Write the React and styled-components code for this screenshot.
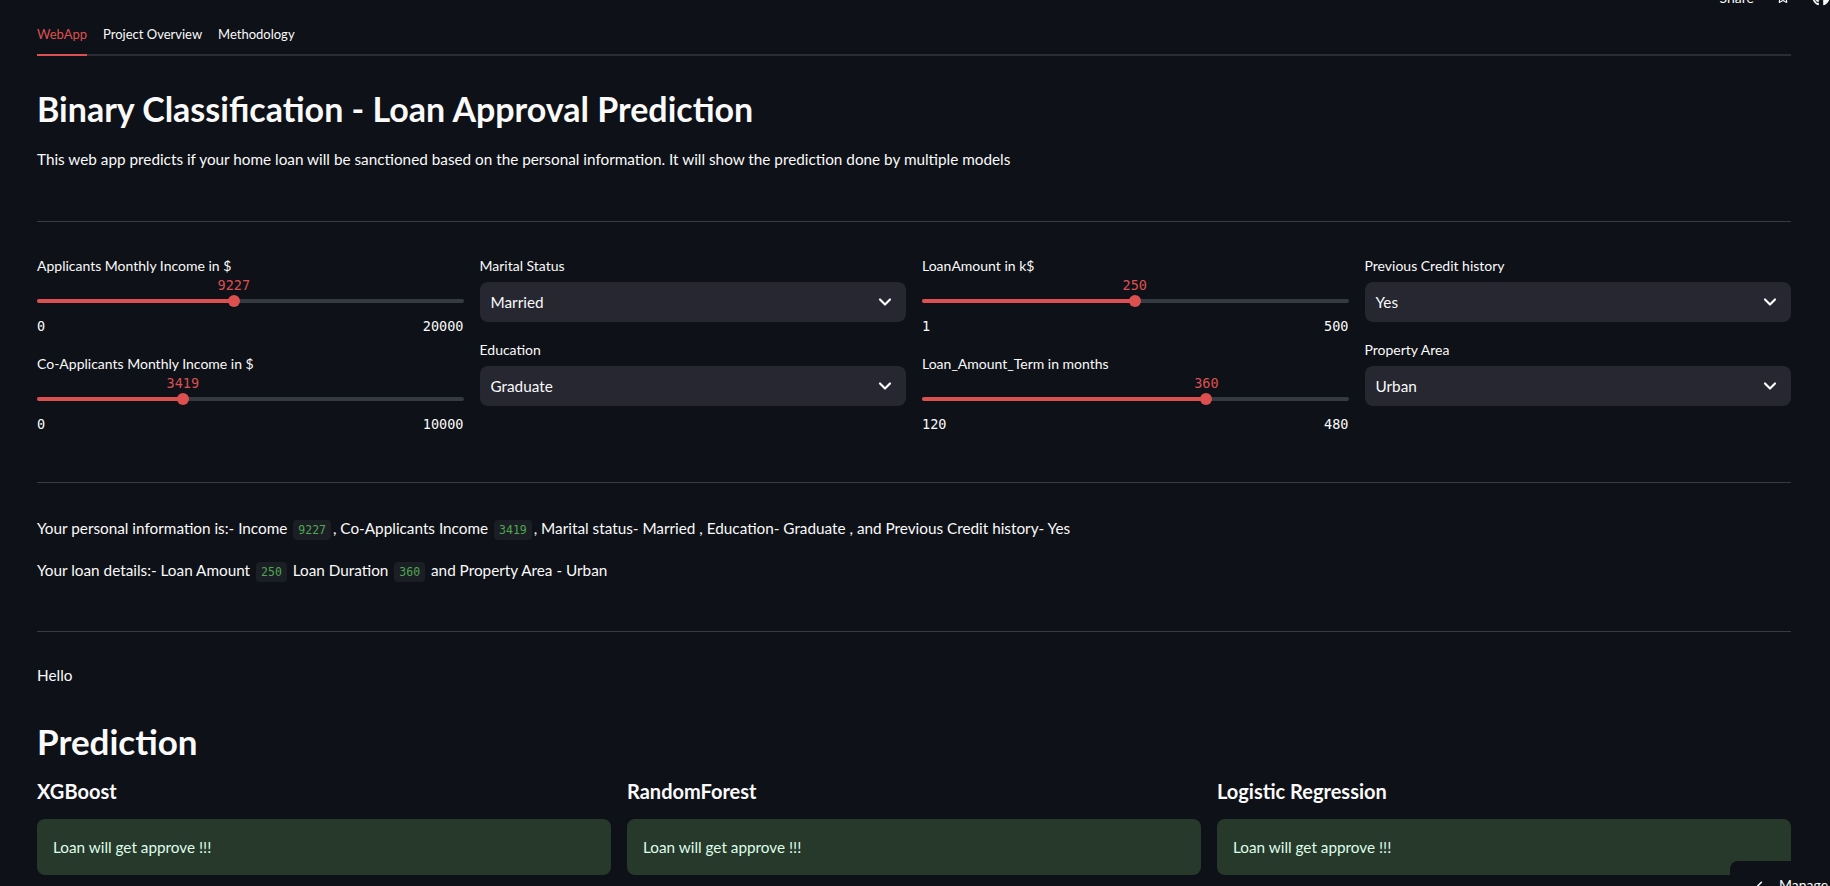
import React from 'react';
import styled, { createGlobalStyle } from 'styled-components';
import { Star, ChevronLeft } from 'lucide-react';
import { FaGithub } from 'react-icons/fa';

const RED = '#dd5050';
const TEXT = '#fafafa';
const SANS = `Lato, "Noto Sans", sans-serif`;
const MONO = `"DejaVu Sans Mono", "Liberation Mono", monospace`;

const GlobalStyle = createGlobalStyle`
  html, body {
    margin: 0;
    padding: 0;
    height: 886px;
    overflow: hidden;
    background: #0e1117;
    color: ${TEXT};
    font-family: ${SANS};
  }
`;

const Page = styled.div`
  position: relative;
  height: 886px;
  padding: 0 39px 0 37px;
  box-sizing: border-box;
  overflow: hidden;
`;

const TopBar = styled.div`
  position: absolute;
  top: -12px;
  right: 0;
  display: flex;
  align-items: center;
  gap: 22px;
  font-size: 14px;
  color: ${TEXT};
  svg {
    display: block;
  }
`;

const TabList = styled.div`
  display: flex;
  gap: 16px;
  margin-top: 14px;
  border-bottom: 2px solid #2b2c34;
`;

const Tab = styled.div`
  height: 40px;
  margin-bottom: -2px;
  border-bottom: 2px solid ${(p) => (p.$active ? RED : 'transparent')};
  display: flex;
  align-items: center;
  font-size: 13px;
  color: ${(p) => (p.$active ? RED : TEXT)};
`;

const Title = styled.h1`
  margin: 33px 0 0;
  font-size: 34px;
  line-height: 1.2;
  font-weight: 700;
`;

const Text = styled.p`
  margin: ${(p) => p.$mt || 0}px 0 0;
  font-size: 15.3px;
  line-height: 24px;
`;

const Rule = styled.hr`
  margin: ${(p) => p.$mt}px 0 0;
  border: none;
  height: 1px;
  background: #393b42;
`;

const WidgetGrid = styled.div`
  display: grid;
  grid-template-columns: repeat(4, 1fr);
  gap: 16px;
  margin-top: 34px;
`;

const Column = styled.div`
  display: flex;
  flex-direction: column;
  gap: ${(p) => p.$gap}px;
`;

const Label = styled.div`
  font-size: 14px;
  line-height: 20px;
  height: 20px;
`;

const SliderBox = styled.div`
  display: flex;
  flex-direction: column;
`;

const ValueRow = styled.div`
  position: relative;
  height: 18px;
`;

const ValueTag = styled.span`
  position: absolute;
  top: 0;
  transform: translateX(-50%);
  font-family: ${MONO};
  font-size: 13.5px;
  line-height: 18px;
  color: ${RED};
`;

const TrackRow = styled.div`
  height: 14px;
  display: flex;
  align-items: center;
`;

const Track = styled.div`
  position: relative;
  width: 100%;
  height: 4px;
  border-radius: 2px;
  background: #353942;
`;

const Fill = styled.div`
  height: 100%;
  border-radius: 2px;
  background: ${RED};
`;

const Thumb = styled.div`
  position: absolute;
  top: 50%;
  width: 12px;
  height: 12px;
  border-radius: 50%;
  background: ${RED};
  transform: translate(-50%, -50%);
`;

const MinMax = styled.div`
  margin-top: 10px;
  height: 16px;
  display: flex;
  justify-content: space-between;
  font-family: ${MONO};
  font-size: 13.5px;
  line-height: 16px;
`;

const SelectBox = styled.div`
  display: flex;
  flex-direction: column;
  gap: 6px;
`;

const SelectField = styled.div`
  height: 40px;
  border-radius: 8px;
  background: #262730;
  display: flex;
  align-items: center;
  justify-content: space-between;
  padding: 0 11px 0 11px;
  font-size: 15.3px;
`;

const Code = styled.code`
  font-family: ${MONO};
  font-size: 11.5px;
  color: #4fa84f;
  background: #1c1e25;
  border-radius: 4px;
  padding: 3px 5px;
  margin: 0 2px;
`;

const SubTitle = styled.h2`
  margin: 33px 0 0;
  font-size: 35px;
  line-height: 43px;
  font-weight: 700;
`;

const ModelGrid = styled.div`
  display: grid;
  grid-template-columns: repeat(3, 1fr);
  gap: 16px;
  margin-top: 14px;
`;

const ModelCol = styled.div`
  display: flex;
  flex-direction: column;
  gap: 14px;
`;

const ModelName = styled.h3`
  margin: 0;
  font-size: 20px;
  line-height: 28px;
  font-weight: 700;
`;

const Alert = styled.div`
  background: #27392b;
  color: #dffde9;
  border-radius: 8px;
  padding: 16px;
  font-size: 15.3px;
  line-height: 24px;
`;

const ManageButton = styled.div`
  position: absolute;
  left: 1730px;
  top: 861px;
  width: 120px;
  height: 40px;
  background: #0e1117;
  border-radius: 8px 0 0 0;
  display: flex;
  align-items: flex-start;
  padding: 15px 0 0 22px;
  gap: 12px;
  box-sizing: border-box;
  font-size: 14px;
  svg {
    margin-top: 2px;
  }
`;

const Chevron = () => (
  <svg width="20" height="20" viewBox="0 0 24 24" fill="none" stroke={TEXT} strokeWidth="2.6" strokeLinecap="round" strokeLinejoin="round">
    <path d="M6 9l6 6 6-6" />
  </svg>
);

const Slider = ({ label, value, min, max }) => {
  const pct = ((value - min) / (max - min)) * 100;
  return (
    <SliderBox>
      <Label>{label}</Label>
      <ValueRow>
        <ValueTag style={{ left: `${pct}%` }}>{value}</ValueTag>
      </ValueRow>
      <TrackRow>
        <Track>
          <Fill style={{ width: `${pct}%` }} />
          <Thumb style={{ left: `${pct}%` }} />
        </Track>
      </TrackRow>
      <MinMax>
        <span>{min}</span>
        <span>{max}</span>
      </MinMax>
    </SliderBox>
  );
};

const Select = ({ label, value }) => (
  <SelectBox>
    <Label>{label}</Label>
    <SelectField>
      <span>{value}</span>
      <Chevron />
    </SelectField>
  </SelectBox>
);

const models = ['XGBoost', 'RandomForest', 'Logistic Regression'];

export default function App() {
  return (
    <>
      <GlobalStyle />
      <Page>
        <TopBar>
          <span>Share</span>
          <Star size={14} color={TEXT} />
          <FaGithub size={18} color={TEXT} />
        </TopBar>

        <TabList>
          <Tab $active>WebApp</Tab>
          <Tab>Project Overview</Tab>
          <Tab>Methodology</Tab>
        </TabList>

        <Title>Binary Classification - Loan Approval Prediction</Title>
        <Text $mt={17}>
          This web app predicts if your home loan will be sanctioned based on the personal information. It will show the prediction done by multiple models
        </Text>

        <Rule $mt={50} />

        <WidgetGrid>
          <Column $gap={20}>
            <Slider label="Applicants Monthly Income in $" value={9227} min={0} max={20000} />
            <Slider label="Co-Applicants Monthly Income in $" value={3419} min={0} max={10000} />
          </Column>
          <Column $gap={18}>
            <Select label="Marital Status" value="Married" />
            <Select label="Education" value="Graduate" />
          </Column>
          <Column $gap={20}>
            <Slider label="LoanAmount in k$" value={250} min={1} max={500} />
            <Slider label="Loan_Amount_Term in months" value={360} min={120} max={480} />
          </Column>
          <Column $gap={18}>
            <Select label="Previous Credit history" value="Yes" />
            <Select label="Property Area" value="Urban" />
          </Column>
        </WidgetGrid>

        <Rule $mt={50} />

        <Text $mt={33}>
          Your personal information is:- Income <Code>9227</Code>, Co-Applicants Income <Code>3419</Code>, Marital status- Married , Education- Graduate , and Previous Credit history- Yes
        </Text>
        <Text $mt={16}>
          Your loan details:- Loan Amount <Code>250</Code> Loan Duration <Code>360</Code> and Property Area - Urban
        </Text>

        <Rule $mt={47} />

        <Text $mt={31}>Hello</Text>

        <SubTitle>Prediction</SubTitle>

        <ModelGrid>
          {models.map((m) => (
            <ModelCol key={m}>
              <ModelName>{m}</ModelName>
              <Alert>Loan will get approve !!!</Alert>
            </ModelCol>
          ))}
        </ModelGrid>

        <ManageButton>
          <ChevronLeft size={16} color={TEXT} strokeWidth={2.5} />
          <span>Manage app</span>
        </ManageButton>
      </Page>
    </>
  );
}
